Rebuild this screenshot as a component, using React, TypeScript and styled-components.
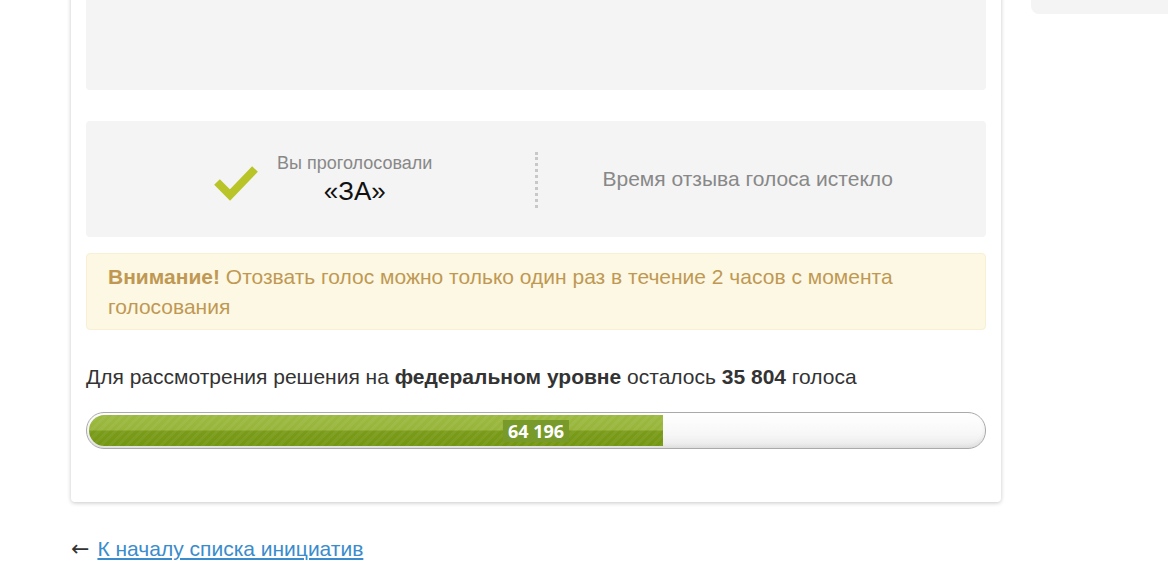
import React from "react";
import styled, { createGlobalStyle } from "styled-components";

const GlobalStyle = createGlobalStyle`
  html, body {
    margin: 0;
    padding: 0;
    background: #fff;
    overflow: hidden;
  }
  body {
    font-family: "Liberation Sans", Arial, sans-serif;
    color: #333;
  }
`;

const VOTES = 64196;
const GOAL = 100000;

function CheckIcon() {
  return (
    <svg width="48" height="40" viewBox="0 0 48 40">
      <path
        d="M5 20 L18 33 L43 7"
        fill="none"
        stroke="#b8c428"
        strokeWidth="8"
        strokeLinejoin="miter"
      />
    </svg>
  );
}

function App() {
  const percent = (VOTES / GOAL) * 100;
  return (
    <>
      <GlobalStyle />
      <Page>
        <Main>
          <Card>
            <InfoBlock />
            <VoteBlock>
              <VoteResult>
                <CheckIcon />
                <VoteText>
                  <VoteCaption>Вы проголосовали</VoteCaption>
                  <VoteValue>«ЗА»</VoteValue>
                </VoteText>
              </VoteResult>
              <Divider />
              <VoteStatus>Время отзыва голоса истекло</VoteStatus>
            </VoteBlock>
            <Warning>
              <strong>Внимание!</strong> Отозвать голос можно только один раз в
              течение 2 часов с момента голосования
            </Warning>
            <Remaining>
              Для рассмотрения решения на <b>федеральном уровне</b> осталось{" "}
              <b>35 804</b> голоса
            </Remaining>
            <Progress>
              <ProgressFill style={{ width: `${percent}%` }} />
              <ProgressLabel>64 196</ProgressLabel>
            </Progress>
          </Card>
          <BackLink>
            <Arrow>←</Arrow>
            <a href="#">К началу списка инициатив</a>
          </BackLink>
        </Main>
        <Sidebar>
          <SideBox />
        </Sidebar>
      </Page>
    </>
  );
}

const Page = styled.div`
  display: flex;
  gap: 30px;
  padding-left: 71px;
`;

const Main = styled.div`
  width: 930px;
  flex-shrink: 0;
`;

const Card = styled.div`
  margin-top: -30px;
  padding: 15px 15px 53px;
  background: #fff;
  border-radius: 0 0 4px 4px;
  box-shadow: 0 1px 4px rgba(0, 0, 0, 0.22);
  display: flex;
  flex-direction: column;
`;

const InfoBlock = styled.div`
  height: 105px;
  background: #f4f4f4;
  border-radius: 4px;
`;

const VoteBlock = styled.div`
  margin-top: 31px;
  height: 116px;
  background: #f4f4f4;
  border-radius: 4px;
  display: grid;
  grid-template-columns: 1fr auto 1fr;
  align-items: center;
`;

const VoteResult = styled.div`
  display: flex;
  align-items: center;
  justify-content: center;
  gap: 17px;
  padding-left: 24px;
  svg {
    margin-top: 6px;
  }
`;

const VoteText = styled.div`
  display: flex;
  flex-direction: column;
  align-items: center;
`;

const VoteCaption = styled.div`
  font-size: 18px;
  color: #888;
  line-height: 24px;
`;

const VoteValue = styled.div`
  font-size: 26px;
  color: #111;
  line-height: 32px;
`;

const Divider = styled.div`
  height: 56px;
  border-left: 3px dotted #c8c8c8;
  margin-top: 2px;
`;

const VoteStatus = styled.div`
  text-align: center;
  font-size: 21px;
  color: #888;
  padding-right: 28px;
`;

const Warning = styled.div`
  margin-top: 16px;
  padding: 8px 21px 7px;
  background: #fcf8e3;
  border: 1px solid #f9efd3;
  border-radius: 4px;
  color: #c09853;
  font-size: 21px;
  line-height: 30px;
  strong {
    font-weight: bold;
  }
`;

const Remaining = styled.div`
  margin-top: 35px;
  font-size: 21px;
  line-height: 24px;
  color: #333;
  b {
    font-weight: bold;
  }
`;

const Progress = styled.div`
  margin-top: 23px;
  position: relative;
  height: 37px;
  box-sizing: border-box;
  padding: 2px;
  border: 1px solid #aaa;
  border-radius: 18px;
  background: linear-gradient(#ffffff, #f7f7f7 60%, #e9e9e9);
  box-shadow: inset 0 -2px 4px rgba(0, 0, 0, 0.06);
  display: flex;
`;

const ProgressFill = styled.div`
  height: 100%;
  border-radius: 16px 0 0 16px;
  background:
    repeating-linear-gradient(
      -45deg,
      rgba(255, 255, 255, 0.05) 0 3px,
      transparent 3px 6px
    ),
    linear-gradient(#9cb941 0%, #98b53a 48%, #7a9b1b 52%, #739712 100%);
`;

const ProgressLabel = styled.span`
  position: absolute;
  left: 50%;
  top: 50%;
  transform: translate(-50%, -50%);
  padding: 0 5px;
  background: #779a2b;
  color: #fff;
  font-family: "Open Sans", sans-serif;
  font-weight: bold;
  font-size: 18px;
  line-height: 22px;
`;

const BackLink = styled.div`
  margin-top: 35px;
  font-size: 21px;
  line-height: 24px;
  color: #333;
  a {
    color: #3a8ccc;
    text-decoration: underline;
  }
`;

const Arrow = styled.span`
  font-family: "DejaVu Sans", sans-serif;
  font-size: 22px;
  margin-right: 8px;
`;

const Sidebar = styled.div`
  flex: 1;
`;

const SideBox = styled.div`
  height: 14px;
  background: #f4f4f4;
  border-radius: 0 0 0 8px;
`;

export default App;
